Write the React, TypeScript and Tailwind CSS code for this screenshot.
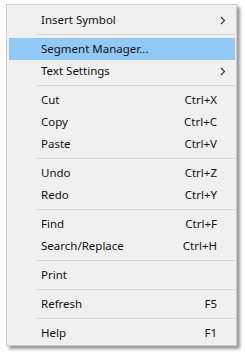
import React from "react";

type Item =
  | { type: "sep" }
  | { type: "item"; label: string; shortcut?: string; sub?: boolean; active?: boolean };

const items: Item[] = [
  { type: "item", label: "Insert Symbol", sub: true },
  { type: "sep" },
  { type: "item", label: "Segment Manager...", active: true },
  { type: "item", label: "Text Settings", sub: true },
  { type: "sep" },
  { type: "item", label: "Cut", shortcut: "Ctrl+X" },
  { type: "item", label: "Copy", shortcut: "Ctrl+C" },
  { type: "item", label: "Paste", shortcut: "Ctrl+V" },
  { type: "sep" },
  { type: "item", label: "Undo", shortcut: "Ctrl+Z" },
  { type: "item", label: "Redo", shortcut: "Ctrl+Y" },
  { type: "sep" },
  { type: "item", label: "Find", shortcut: "Ctrl+F" },
  { type: "item", label: "Search/Replace", shortcut: "Ctrl+H" },
  { type: "sep" },
  { type: "item", label: "Print" },
  { type: "sep" },
  { type: "item", label: "Refresh", shortcut: "F5" },
  { type: "sep" },
  { type: "item", label: "Help", shortcut: "F1" },
];

function Chevron() {
  return (
    <svg width="6" height="9" viewBox="0 0 6 9" className="block">
      <path d="M1 1 L4.5 4.5 L1 8" fill="none" stroke="#333" strokeWidth="1.1" />
    </svg>
  );
}

export default function App() {
  return (
    <div className="w-[245px] h-[354px] bg-white pt-[4px] pl-[6px]">
      <div
        className="w-[231px] bg-[#f0f0f0] border border-[#cccccc] pt-[4px] pb-[1px] pl-[2px] pr-[1px] shadow-[3px_3px_3px_rgba(0,0,0,0.4)]"
        style={{ fontFamily: '"Noto Sans", "Open Sans", sans-serif' }}
      >
        {items.map((it, i) =>
          it.type === "sep" ? (
            <div key={i} className="h-[7px] flex items-center pl-[28px]">
              <div className="h-px w-full bg-[#d7d7d7]" />
            </div>
          ) : (
            <div
              key={i}
              className={`h-[22px] flex items-center text-[11.5px] text-[#111] ${
                it.active ? "bg-[#91c9f7]" : ""
              }`}
            >
              <div className="pl-[32px] flex-1 leading-none">{it.label}</div>
              {it.shortcut && (
                <div className="pr-[18px] leading-none text-right">{it.shortcut}</div>
              )}
              {it.sub && (
                <div className="pr-[9px]">
                  <Chevron />
                </div>
              )}
            </div>
          )
        )}
      </div>
    </div>
  );
}
